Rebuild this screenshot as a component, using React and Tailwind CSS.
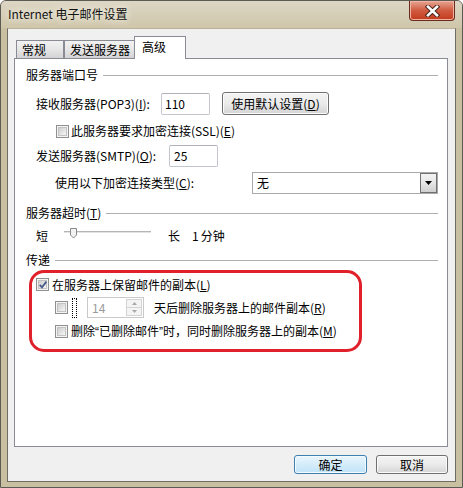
import React from "react";

function CheckBox({ checked = false }) {
  return (
    <span className="relative flex h-[13px] w-[13px] shrink-0 items-center justify-center border border-[#8e8f8f] bg-[#f4f4f4]">
      <span className="h-[9px] w-[9px] border border-[#c2c2c2] bg-linear-to-br from-[#cdcdcd] to-[#f7f7f7]" />
      {checked && (
        <svg className="absolute left-[1px] top-[1px]" width="10" height="10" viewBox="0 0 10 10">
          <path d="M1.8 4.8 L4 7.4 L8.4 1.6" stroke="#4a5b8c" strokeWidth="1.8" fill="none" />
        </svg>
      )}
    </span>
  );
}

function GroupHeader({ children, className = "" }) {
  return (
    <div className={"ml-[11px] mr-[9px] flex h-[14px] items-center " + className}>
      <span className="leading-[14px]">{children}</span>
      <span className="ml-[5px] h-px flex-1 bg-[#b0b0b0]" />
    </div>
  );
}

function TextBox({ value, className = "" }) {
  return (
    <div className={"flex h-[22px] w-[49px] items-center rounded-[2px] border border-[#c3c6cc] border-t-[#aeb1b8] bg-white leading-[14px] " + className}>
      {value}
    </div>
  );
}

function PushButton({ children, primary = false, className = "" }) {
  const look = primary
    ? "border-[#3c7fb1] bg-linear-to-b from-[#eaf6fd] to-[#bfe3f7] shadow-[inset_0_0_0_1px_#f4fbff]"
    : "border-[#707070] bg-linear-to-b from-[#f4f4f4] via-[#ebebeb] to-[#d4d4d4] shadow-[inset_0_0_0_1px_#fbfbfb]";
  return (
    <div className={"flex items-center justify-center rounded-[3px] border leading-[14px] " + look + " " + className}>
      {children}
    </div>
  );
}

export default function App() {
  return (
    <div className="flex h-[488px] w-[463px] flex-col overflow-hidden rounded-t-[6px] border border-[#5c5a52] bg-[#c9bfa1] font-['Noto_Sans_CJK_SC','Noto_Sans',sans-serif] text-[12px] text-black">
      {/* Title bar */}
      <div className="flex h-[27px] shrink-0 items-start justify-between bg-linear-to-b from-[#dcd6c4] to-[#cfc6aa]">
        <span className="pl-[7px] pt-[6px] leading-[14px] text-[#111] [text-shadow:0_0_6px_#f3efe4,0_0_10px_#f3efe4]">
          Internet 电子邮件设置
        </span>
        <div className="mr-[7px] flex h-[20px] w-[46px] items-center justify-center rounded-b-[4px] border border-t-0 border-[#6b2a1c] bg-linear-to-b from-[#e6a593] via-[#cf5a3f] to-[#c3391b] shadow-[inset_0_0_0_1px_#eeb3a2]">
          <svg width="15" height="12" viewBox="0 0 15 12">
            <path d="M3 1.8 L12 10.2 M12 1.8 L3 10.2" stroke="#3d1e18" strokeWidth="4.4" strokeLinecap="square" />
            <path d="M3 1.8 L12 10.2 M12 1.8 L3 10.2" stroke="#ffffff" strokeWidth="2.6" strokeLinecap="square" />
          </svg>
        </div>
      </div>

      {/* Client area */}
      <div className="ml-[6px] flex h-[454px] w-[449px] shrink-0 flex-col border border-[#6e6c64] border-t-[#b9b19a] bg-[#f0f0f0]">
        {/* Tabs */}
        <div className="mt-[7px] flex h-[22px] items-end">
          <div className="ml-[8px] flex h-[18px] w-[48px] items-center border border-b-0 border-[#898c95] bg-linear-to-b from-[#f2f2f2] via-[#e6e6e6] to-[#d3d3d3] pl-[5px] leading-[14px]">
            常规
          </div>
          <div className="flex h-[18px] w-[71px] items-center border border-b-0 border-[#898c95] bg-linear-to-b from-[#f2f2f2] via-[#e6e6e6] to-[#d3d3d3] pl-[5px] leading-[14px]">
            发送服务器
          </div>
          <div className="relative z-10 -mb-px ml-[-1px] h-[23px] w-[52px] border border-b-0 border-[#898c95] bg-white pl-[7px] pt-[3px] leading-[14px]">
            高级
          </div>
        </div>

        {/* Tab page */}
        <div className="ml-[6px] flex h-[389px] w-[434px] flex-col border border-[#898c95] bg-white">
          <GroupHeader className="mt-[9px]">服务器端口号</GroupHeader>

          <div className="mt-[10px] flex h-[23px] items-center pl-[21px]">
            <span className="w-[125px] leading-[14px]">
              接收服务器(POP3)(<u>I</u>):
            </span>
            <TextBox value="110" className="pl-[3px]" />
            <PushButton className="ml-[12px] h-[23px] w-[107px]">
              使用默认设置(<u>D</u>)
            </PushButton>
          </div>

          <div className="mt-[9px] flex h-[14px] items-center pl-[41px]">
            <CheckBox />
            <span className="ml-[2px] leading-[14px]">
              此服务器要求加密连接(SSL)(<u>E</u>)
            </span>
          </div>

          <div className="mt-[6px] flex h-[23px] items-center pl-[21px]">
            <span className="w-[133px] leading-[14px]">
              发送服务器(SMTP)(<u>O</u>):
            </span>
            <TextBox value="25" className="pl-[4px]" />
          </div>

          <div className="mt-[4px] flex h-[23px] items-center pl-[40px]">
            <span className="w-[197px] leading-[14px]">
              使用以下加密连接类型(<u>C</u>):
            </span>
            <div className="flex h-[22px] w-[186px] items-center justify-between border border-[#a9a9a9] bg-white pl-[4px]">
              <span className="leading-[14px]">无</span>
              <div className="flex h-[20px] w-[17px] items-center justify-center border border-[#707070] bg-linear-to-b from-[#f3f3f3] via-[#e6e6e6] to-[#cfcfcf]">
                <svg width="7" height="4" viewBox="0 0 7 4">
                  <path d="M0 0 H7 L3.5 4 Z" fill="#000" />
                </svg>
              </div>
            </div>
          </div>

          <GroupHeader className="mt-[12px]">
            服务器超时(<u>T</u>)
          </GroupHeader>

          <div className="mt-[8px] flex h-[16px] items-center pl-[21px]">
            <span className="leading-[14px]">短</span>
            <div className="relative ml-[16px] h-[16px] w-[87px]">
              <div className="mt-[3px] h-px w-full bg-[#b5b5b5]" />
              <div className="h-px w-full bg-[#e3e3e3]" />
              <svg className="absolute left-[6px] top-0" width="7" height="11" viewBox="0 0 7 11">
                <path d="M0.5 0.5 H6.5 V7 L3.5 10 L0.5 7 Z" fill="#f2f2f2" stroke="#8a8a8a" />
              </svg>
            </div>
            <span className="ml-[17px] leading-[14px]">长</span>
            <span className="ml-[12px] leading-[14px]">1</span>
            <span className="ml-[2px] leading-[14px]">分钟</span>
          </div>

          <GroupHeader className="mt-[9px]">传递</GroupHeader>

          <div className="ml-[14px] mt-[3px] flex h-[82px] w-[333px] flex-col rounded-[15px] border-[3px] border-[#e0202a]">
            <div className="mt-[5px] flex h-[13px] items-center pl-[4px]">
              <CheckBox checked />
              <span className="ml-[3px] leading-[14px]">
                在服务器上保留邮件的副本(<u>L</u>)
              </span>
            </div>

            <div className="mt-[6px] flex h-[21px] items-center pl-[23px]">
              <CheckBox />
              <span className="ml-[4px] h-[20px] w-[5px] border border-dotted border-black" />
              <div className="ml-[10px] flex h-[21px] w-[57px] items-center justify-between border border-[#c9c9c9] bg-white pl-[4px] pr-px">
                <span className="leading-[14px] text-[#9a9a9a]">14</span>
                <div className="flex h-[17px] w-[16px] flex-col">
                  <div className="flex h-[9px] items-center justify-center border border-[#d4d4d4] bg-[#f4f4f4]">
                    <svg width="5" height="3" viewBox="0 0 5 3">
                      <path d="M0 3 H5 L2.5 0 Z" fill="#a8a8a8" />
                    </svg>
                  </div>
                  <div className="-mt-px flex h-[9px] items-center justify-center border border-[#d4d4d4] bg-[#f4f4f4]">
                    <svg width="5" height="3" viewBox="0 0 5 3">
                      <path d="M0 0 H5 L2.5 3 Z" fill="#a8a8a8" />
                    </svg>
                  </div>
                </div>
              </div>
              <span className="ml-[10px] leading-[14px]">
                天后删除服务器上的邮件副本(<u>R</u>)
              </span>
            </div>

            <div className="mt-[7px] flex h-[13px] items-center pl-[23px]">
              <CheckBox />
              <span className="ml-[3px] leading-[14px]">
                删除<span className="font-['Liberation_Sans',sans-serif]">“</span>已删除邮件<span className="font-['Liberation_Sans',sans-serif]">”</span>时，同时删除服务器上的副本(<u>M</u>)
              </span>
            </div>
          </div>
        </div>

        {/* Dialog buttons */}
        <div className="mt-[8px] flex justify-end gap-[9px] pr-[7px]">
          <PushButton primary className="h-[19px] w-[73px]">
            确定
          </PushButton>
          <PushButton className="h-[19px] w-[72px]">取消</PushButton>
        </div>
      </div>
    </div>
  );
}
